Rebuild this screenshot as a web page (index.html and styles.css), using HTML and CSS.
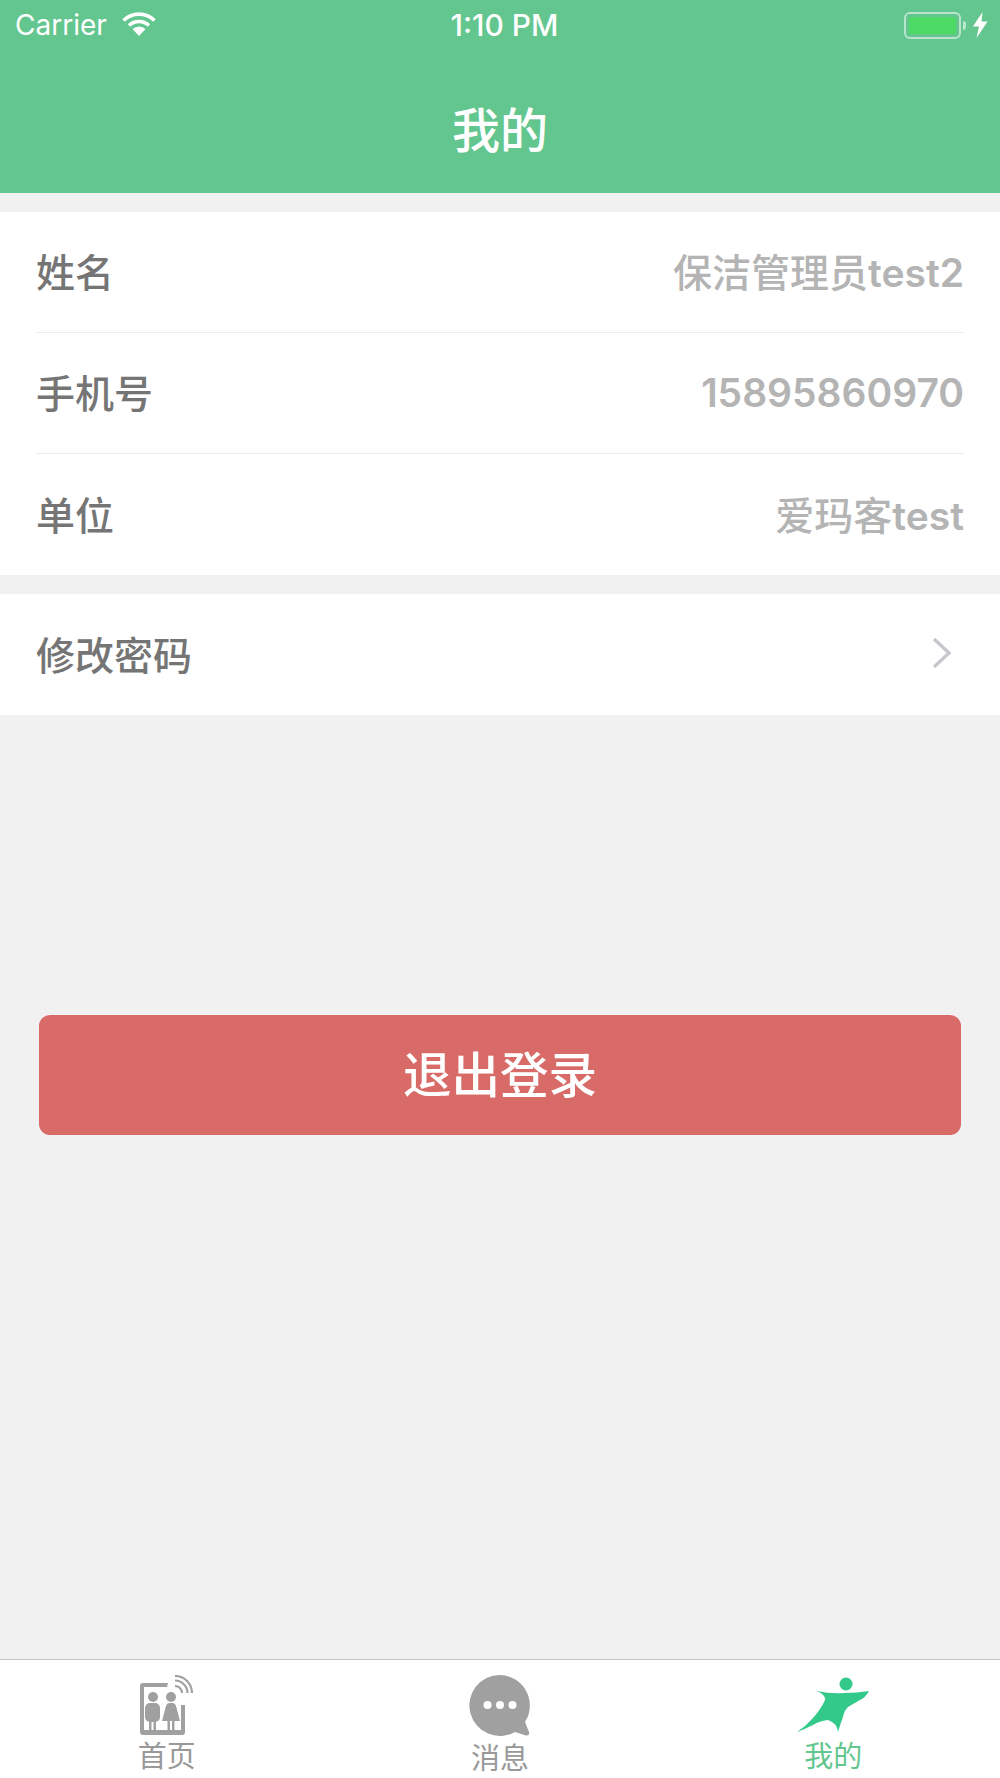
FILE: index.html
```html
<!DOCTYPE html>
<html lang="zh-CN">
<head>
    <meta charset="UTF-8">
    <meta name="viewport" content="width=device-width, initial-scale=1.0">
    <title>我的</title>
    <link rel="stylesheet" href="styles.css">
</head>
<body>
    <div class="page">
        <header class="header">
            <div class="status-bar">
                <div class="status-left">
                    <span>Carrier</span>
                    <svg class="wifi" width="36" height="26" viewBox="0 0 36 26">
                        <path d="M18 25 L11.5 18 A9.5 9.5 0 0 1 24.5 18 Z" fill="#fff"/>
                        <path d="M8 14.5 A14.5 14.5 0 0 1 28 14.5" fill="none" stroke="#fff" stroke-width="3.6"/>
                        <path d="M2.5 9.5 A22 22 0 0 1 33.5 9.5" fill="none" stroke="#fff" stroke-width="3.6"/>
                    </svg>
                </div>
                <div class="status-time">1:10 PM</div>
                <div class="status-right">
                    <div class="battery"><div class="battery-fill"></div></div>
                    <div class="battery-cap"></div>
                    <svg class="bolt" width="15" height="26" viewBox="0 0 15 26">
                        <path d="M9.5 0 L0 14.5 H6 L3.5 26 L14.5 9.5 H8.5 Z" fill="#fff"/>
                    </svg>
                </div>
            </div>
            <h1 class="title">我的</h1>
        </header>

        <main class="content">
            <section class="group">
                <div class="row">
                    <span class="label">姓名</span>
                    <span class="value">保洁管理员<span class="latin">test2</span></span>
                </div>
                <div class="row">
                    <span class="label">手机号</span>
                    <span class="value phone">15895860970</span>
                </div>
                <div class="row">
                    <span class="label">单位</span>
                    <span class="value">爱玛客<span class="latin">test</span></span>
                </div>
            </section>

            <section class="group">
                <div class="row">
                    <span class="label">修改密码</span>
                    <svg class="arrow" width="20" height="32" viewBox="0 0 20 32">
                        <path d="M2 2 L17 16 L2 30" fill="none" stroke="#c8c8cc" stroke-width="3.4"/>
                    </svg>
                </div>
            </section>

            <button class="logout" type="button">退出登录</button>
        </main>

        <nav class="tabbar">
            <div class="tab">
                <svg class="tab-icon" width="54" height="60" viewBox="0 0 54 60">
                    <path d="M28 8 H3 Q0 8 0 11 V57 Q0 60 3 60 H42 Q45 60 45 57 V30 H41 V55 H4 V12 H27 Z" fill="#a0a0a0"/>
                    <circle cx="13" cy="22" r="5" fill="#a0a0a0"/>
                    <rect x="5" y="28" width="15" height="19" rx="5" fill="#a0a0a0"/>
                    <rect x="9" y="45" width="2.5" height="10" fill="#a0a0a0"/>
                    <rect x="13.500" y="45" width="2.5" height="10" fill="#a0a0a0"/>
                    <circle cx="31" cy="22" r="5" fill="#a0a0a0"/>
                    <path d="M29 28 H33 Q35 28 36 31 L40 46 H22 L26 31 Q27 28 29 28 Z" fill="#a0a0a0"/>
                    <rect x="27.500" y="45" width="2.5" height="10" fill="#a0a0a0"/>
                    <rect x="32" y="45" width="2.5" height="10" fill="#a0a0a0"/>
                    <path d="M35 11 A7 7 0 0 1 42 18 M35 5.500 A12.500 12.500 0 0 1 47.500 18 M35 1 A17 17 0 0 1 52 18" fill="none" stroke="#a0a0a0" stroke-width="2.2"/>
                </svg>
                <span class="tab-text">首页</span>
            </div>
            <div class="tab">
                <svg class="tab-icon" width="62" height="62" viewBox="0 0 62 62">
                    <path d="M31 0 A30.500 30.500 0 0 1 56 47 L60 57 Q61 61 57 60.500 L46 57 A30.500 30.500 0 1 1 31 0 Z" fill="#a0a0a0"/>
                    <circle cx="18.500" cy="30" r="4" fill="#fff"/>
                    <circle cx="31" cy="30" r="4" fill="#fff"/>
                    <circle cx="43.500" cy="30" r="4" fill="#fff"/>
                </svg>
                <span class="tab-text">消息</span>
            </div>
            <div class="tab tab-active">
                <svg class="tab-icon" width="72" height="60" viewBox="0 0 72 60">
                    <circle cx="49" cy="9" r="6.500" fill="#33c98b"/>
                    <path d="M20 16 Q34 19 47 18 Q60 18 72 16 Q68 23 63 25 Q56 29 51 32 Q47 36 46 42 Q43 50 41 57 Q40 48 31 45 Q22 46 16 50 Q8 54 0 57 Q9 51 16 43 Q24 34 28 25 Q29 20 20 16 Z" fill="#33c98b"/>
                </svg>
                <span class="tab-text">我的</span>
            </div>
        </nav>
    </div>
</body>
</html>
```

FILE: styles.css
```css
* {
    box-sizing: border-box;
}
body {
    margin: 0;
    font-family: Inter, "Noto Sans CJK SC", sans-serif;
    background-color: #f1f1f1;
}
.page {
    display: flex;
    flex-direction: column;
    height: 1778px;
}
.header {
    height: 193px;
    background-color: #64c68f;
    color: #fff;
}
.status-bar {
    display: flex;
    align-items: center;
    justify-content: space-between;
    height: 50px;
    padding: 0 12px 0 15px;
    font-size: 28px;
}
.status-left {
    display: flex;
    align-items: center;
    gap: 14px;
    width: 300px;
}
.wifi {
    margin-top: -3px;
}
.status-time {
    margin-left: 6px;
    font-size: 30px;
    font-weight: 500;
}
.status-right {
    display: flex;
    align-items: center;
    justify-content: flex-end;
    width: 300px;
}
.battery {
    width: 57px;
    height: 27px;
    padding: 3px;
    border: 2px solid rgba(255, 255, 255, 0.55);
    border-radius: 6px;
}
.battery-fill {
    height: 100%;
    background-color: #4cd964;
    border-radius: 2px;
}
.battery-cap {
    width: 3px;
    height: 9px;
    margin-left: 2px;
    background-color: rgba(255, 255, 255, 0.55);
    border-radius: 0 3px 3px 0;
}
.bolt {
    margin-left: 7px;
}
.title {
    margin: 41px 0 0;
    font-size: 48px;
    font-weight: 500;
    line-height: 80px;
    text-align: center;
}
.content {
    flex: 1;
    padding-top: 19px;
}
.group {
    margin-bottom: 19px;
    padding: 0 36px;
    background-color: #fff;
}
.row {
    display: flex;
    align-items: center;
    justify-content: space-between;
    height: 121px;
    padding-bottom: 4px;
    border-bottom: 1px solid #ececec;
}
.row:last-child {
    border-bottom: none;
}
.label {
    font-size: 39px;
    font-weight: 500;
    color: #757575;
}
.value {
    font-size: 39px;
    font-weight: 500;
    color: #b4b4b4;
}
.latin {
    font-weight: 600;
}
.phone {
    margin-top: 3px;
    font-weight: 600;
}
.arrow {
    margin-right: 12px;
}
.logout {
    display: block;
    width: 922px;
    height: 120px;
    margin: 300px auto 0;
    padding-bottom: 8px;
    background-color: #d86a67;
    color: #fff;
    border: none;
    border-radius: 11px;
    font-family: inherit;
    font-size: 48.500px;
    font-weight: 500;
}
.tabbar {
    display: flex;
    height: 119px;
    background-color: #fff;
    border-top: 1px solid #c4c4c4;
}
.tab {
    flex: 1;
    display: flex;
    flex-direction: column;
    align-items: center;
    padding-top: 15px;
    color: #999;
}
.tab-active {
    color: #64c68f;
}
.tab-icon {
    flex: none;
}
.tab-text {
    font-size: 29px;
    line-height: 38px;
    margin-top: 3px;
}
```
